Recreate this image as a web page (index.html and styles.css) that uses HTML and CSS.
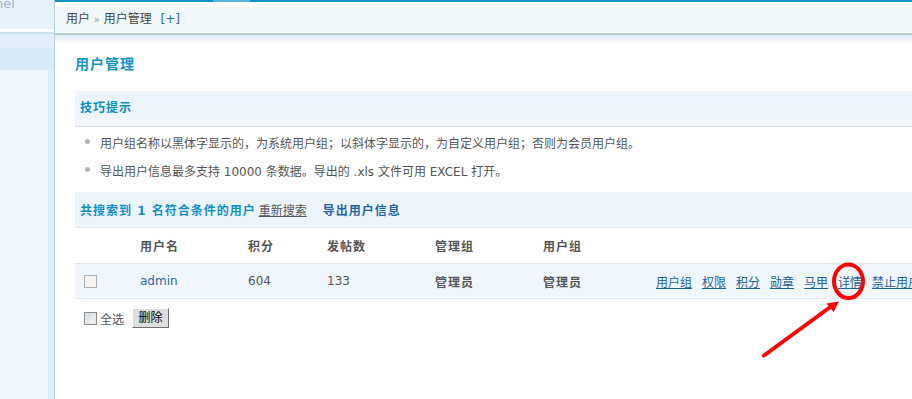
FILE: index.html
```html
<!DOCTYPE html>
<html lang="zh-CN">
<head>
<meta charset="utf-8">
<title>用户管理</title>
<link rel="stylesheet" href="styles.css">
</head>
<body>
<div class="page">
  <aside class="side">
    <div class="side-top"><span class="side-title">nel</span></div>
    <div class="side-item"></div>
    <div class="side-item active"></div>
    <div class="side-rest"></div>
  </aside>
  <main class="main">
    <div class="topbar"></div>
    <div class="crumb">用户 <span class="raquo">»</span> 用户管理 <a class="plus">[+]</a></div>
    <div class="shade"></div>
    <div class="content">
      <h3 class="title">用户管理</h3>
      <div class="tips">
        <div class="tips-head">技巧提示</div>
        <ul class="tips-list">
          <li>用户组名称以黑体字显示的，为系统用户组；以斜体字显示的，为自定义用户组；否则为会员用户组。</li>
          <li>导出用户信息最多支持 10000 条数据。导出的 .xls 文件可用 EXCEL 打开。</li>
        </ul>
      </div>
      <div class="result-head">
        <span class="count">共搜索到 1 名符合条件的用户</span>
        <a class="research">重新搜索</a>
        <a class="export">导出用户信息</a>
      </div>
      <div class="grid head-row">
        <div></div>
        <div>用户名</div>
        <div>积分</div>
        <div>发帖数</div>
        <div>管理组</div>
        <div>用户组</div>
        <div></div>
      </div>
      <div class="grid data-row">
        <div><span class="check"></span></div>
        <div><a class="user">admin</a></div>
        <div>604</div>
        <div>133</div>
        <div class="strong">管理员</div>
        <div class="strong">管理员</div>
        <div class="links">
          <a>用户组</a><a>权限</a><a>积分</a><a>勋章</a><a>马甲</a><a>详情</a><a>禁止用户</a>
        </div>
      </div>
      <div class="footer-row">
        <span class="check-all"></span>
        <span class="all-label">全选</span>
        <button class="btn" type="button">删除</button>
      </div>
    </div>
  </main>
  <svg class="annot" width="912" height="399" viewBox="0 0 912 399">
    <ellipse cx="848.5" cy="281.3" rx="14.5" ry="16.7" fill="none" stroke="#f00" stroke-width="4"/>
    <line x1="764" y1="355.5" x2="831" y2="306.5" stroke="#f00" stroke-width="4" stroke-linecap="round"/>
    <polygon points="839,301.5 826.5,303.5 833.5,312" fill="#f00"/>
  </svg>
</div>
</body>
</html>
```

FILE: styles.css
```css
html, body {
  margin: 0;
  padding: 0;
  background: #fff;
}

body {
  font-family: Verdana, "DejaVu Sans", "Noto Sans CJK SC", sans-serif;
  font-size: 12px;
  color: #555;
}

.page {
  position: relative;
  display: flex;
  width: 912px;
  height: 399px;
  overflow: hidden;
}

/* ---------- sidebar ---------- */
.side {
  flex: none;
  width: 54px;
  border-right: 1px solid #b4d1e3;
  display: flex;
  flex-direction: column;
}

.side-top {
  height: 29px;
  background: #e6f2fb;
  border-bottom: 3px solid #fff;
  overflow: hidden;
}

.side-title {
  display: block;
  margin: -3px 0 0 -5px;
  font-size: 13px;
  line-height: 14px;
  color: #9fb2c1;
}

.side-item {
  height: 14px;
  background: #e2effa;
  border-top: 2px solid #cbdfec;
}

.side-item.active {
  height: 22px;
  border-top: 0;
  background: #d8eaf8;
}

.side-rest {
  flex: 1;
  background: linear-gradient(to right, #eff7fd 48px, #dceefa 48px);
}

/* ---------- main ---------- */
.main {
  flex: 1;
  min-width: 0;
  display: flex;
  flex-direction: column;
}

.topbar {
  height: 2px;
  border-bottom: 5px solid #fff;
  background: linear-gradient(to right, #0597ca 158px, #5ab5dc 158px, #5ab5dc 195px, #0597ca 195px);
}

.crumb {
  height: 25px;
  line-height: 25px;
  padding-left: 11px;
  background: #eff7fb;
  color: #444;
  white-space: nowrap;
}

.raquo {
  color: #999;
  font-size: 10px;
}

.plus {
  margin-left: 5px;
  color: #2a66ad;
}

.shade {
  margin-top: 1px;
  height: 9px;
  border-top: 2px solid #b5cfdd;
  background: linear-gradient(#dcebf5, #fff);
}

.content {
  padding-left: 20px;
}

.title {
  margin: 10px 0 17px;
  font-size: 14px;
  line-height: 20px;
  font-weight: bold;
  letter-spacing: 1px;
  color: #0a93cd;
}

/* ---------- tips ---------- */
.tips-head {
  height: 35px;
  line-height: 35px;
  padding-left: 5px;
  background: linear-gradient(#ebf3fc, #f2f7fd);
  border-bottom: 1px dotted #c8d2da;
  font-weight: bold;
  letter-spacing: 1px;
  color: #0a8fc6;
}

.tips-list {
  list-style: none;
  margin: 0;
  padding: 1px 0 0;
}

.tips-list li {
  height: 28px;
  display: flex;
  align-items: center;
  white-space: nowrap;
}

.tips-list li::before {
  content: "";
  flex: none;
  width: 5px;
  height: 5px;
  margin: -2px 10px 0;
  border-radius: 50%;
  background: #b5b5b5;
}

/* ---------- results ---------- */
.result-head {
  margin-top: 8px;
  height: 35px;
  display: flex;
  align-items: center;
  padding-left: 5px;
  background: #edf5fc;
  border-bottom: 1px solid #dce8f1;
  white-space: nowrap;
}

.count {
  font-weight: bold;
  letter-spacing: 1px;
  color: #1190c8;
}

.research {
  margin-left: 3px;
  color: #555;
  text-decoration: underline;
}

.export {
  margin-left: 16px;
  font-weight: bold;
  letter-spacing: 1px;
  color: #2563a9;
}

.grid {
  display: grid;
  grid-template-columns: 55px 108px 79px 108px 108px 113px 1fr;
  align-items: center;
  white-space: nowrap;
}

.grid > div + div {
  padding-left: 10px;
}

.head-row {
  height: 35px;
  font-weight: bold;
  letter-spacing: 1px;
  color: #555;
}

.data-row {
  height: 34px;
  background: #f0f7fc;
  border-top: 1px dotted #c5d9e8;
  border-bottom: 1px solid #dae8f2;
}

.check {
  display: block;
  width: 11px;
  height: 11px;
  margin-left: 9px;
  border: 1px solid #aeaeae;
  background: #f4f4f4;
}

.user {
  color: #2d66ac;
}

.strong {
  font-weight: bold;
  letter-spacing: 1px;
}

.links {
  display: flex;
  gap: 10px;
}

.links a {
  color: #1f5fa6;
  text-decoration: underline;
}

/* ---------- footer ---------- */
.footer-row {
  display: flex;
  align-items: center;
  margin-top: 9px;
  padding-left: 9px;
}

.check-all {
  width: 11px;
  height: 11px;
  border: 1px solid #8a8a8a;
  background: linear-gradient(135deg, #cdd4dc, #fbfbfb);
  box-shadow: inset 0 0 0 1px #e6e6e6;
}

.all-label {
  margin-left: 3px;
  color: #555;
}

.btn {
  margin-left: 8px;
  width: 37px;
  height: 20px;
  padding: 0;
  box-sizing: border-box;
  background: #dedede;
  border: 1px solid;
  border-color: #fff #6f6f6f #6f6f6f #fff;
  font-family: inherit;
  font-size: 12px;
  line-height: 18px;
  color: #000;
}

/* ---------- annotation ---------- */
.annot {
  position: absolute;
  top: 0;
  left: 0;
  pointer-events: none;
}
```
